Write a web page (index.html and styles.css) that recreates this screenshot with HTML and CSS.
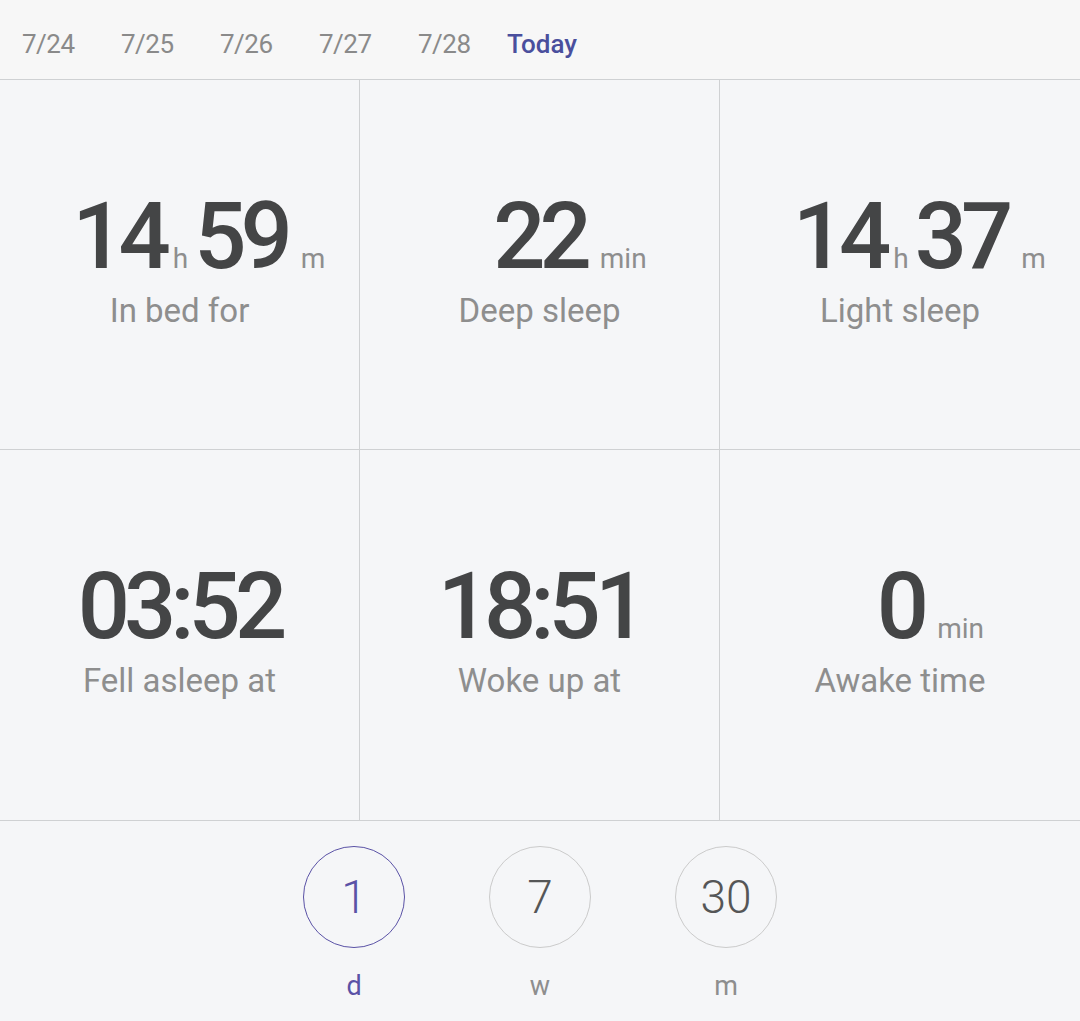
FILE: index.html
```html
<!DOCTYPE html>
<html>
<head>
<meta charset="utf-8">
<link rel="stylesheet" href="styles.css">
</head>
<body>
<div class="app">
  <header class="dates">
    <span class="date">7/24</span>
    <span class="date">7/25</span>
    <span class="date">7/26</span>
    <span class="date">7/27</span>
    <span class="date">7/28</span>
    <span class="date active">Today</span>
  </header>
  <section class="grid">
    <div class="cell">
      <div class="value">
        <span class="spacer"></span>
        <span class="num">14<span class="unit mid">h</span>59</span>
        <span class="unit tail">m</span>
      </div>
      <div class="label">In bed for</div>
    </div>
    <div class="cell">
      <div class="value">
        <span class="spacer"></span>
        <span class="num">22</span>
        <span class="unit tail">min</span>
      </div>
      <div class="label">Deep sleep</div>
    </div>
    <div class="cell last">
      <div class="value">
        <span class="spacer"></span>
        <span class="num">14<span class="unit mid">h</span>37</span>
        <span class="unit tail">m</span>
      </div>
      <div class="label">Light sleep</div>
    </div>
    <div class="cell row2">
      <div class="value">
        <span class="spacer"></span>
        <span class="num">03:52</span>
        <span class="spacer"></span>
      </div>
      <div class="label">Fell asleep at</div>
    </div>
    <div class="cell row2">
      <div class="value">
        <span class="spacer"></span>
        <span class="num">18:51</span>
        <span class="spacer"></span>
      </div>
      <div class="label">Woke up at</div>
    </div>
    <div class="cell row2 last">
      <div class="value">
        <span class="spacer"></span>
        <span class="num">0</span>
        <span class="unit tail">min</span>
      </div>
      <div class="label">Awake time</div>
    </div>
  </section>
  <footer class="range">
    <div class="opt selected">
      <div class="circle">1</div>
      <div class="opt-label">d</div>
    </div>
    <div class="opt">
      <div class="circle">7</div>
      <div class="opt-label">w</div>
    </div>
    <div class="opt">
      <div class="circle">30</div>
      <div class="opt-label">m</div>
    </div>
  </footer>
</div>
</body>
</html>
```

FILE: styles.css
```css
* { box-sizing: border-box; }
html, body {
  margin: 0;
  padding: 0;
  background: #f5f6f8;
}
body {
  font-family: Roboto, "Noto Sans", sans-serif;
  width: 1080px;
  height: 1021px;
  overflow: hidden;
}
.app {
  width: 1080px;
}
.dates {
  height: 80px;
  background: #f7f7f7;
  border-bottom: 1px solid #cfd1d3;
  display: flex;
  align-items: center;
  padding-left: 22px;
  padding-top: 8px;
  gap: 46px;
}
.date {
  font-size: 26px;
  color: #8a8a8a;
  letter-spacing: -0.5px;
  width: 53px;
}
.date.active {
  color: #4a4f9d;
  font-weight: 500;
  width: auto;
  letter-spacing: 0;
  margin-left: -10px;
}
.grid {
  display: grid;
  grid-template-columns: repeat(3, 360px);
  grid-template-rows: 370px 371px;
}
.cell {
  border-right: 1px solid #cfd1d3;
  border-bottom: 1px solid #cfd1d3;
  display: flex;
  flex-direction: column;
  justify-content: center;
  align-items: stretch;
  padding-bottom: 8px;
}
.cell.last { border-right: none; }
.cell.row2 { padding-bottom: 10px; }
.value {
  display: grid;
  grid-template-columns: 1fr auto 1fr;
  align-items: baseline;
  line-height: 1;
}
.num {
  font-size: 92px;
  font-weight: 500;
  color: #444546;
  letter-spacing: -6px;
  white-space: nowrap;
}
.unit {
  font-size: 28px;
  color: #8e8e8e;
  font-weight: 400;
  letter-spacing: 0;
}
.unit.mid {
  margin: 0 6px 0 8px;
}
.unit.tail {
  justify-self: start;
  margin-left: 14px;
}
.label {
  text-align: center;
  font-size: 33px;
  color: #8e8e8e;
  margin-top: 8px;
}
.range {
  height: 200px;
  display: flex;
  justify-content: center;
  gap: 84px;
  padding-top: 25px;
}
.opt {
  display: flex;
  flex-direction: column;
  align-items: center;
  width: 102px;
}
.circle {
  width: 102px;
  height: 102px;
  border-radius: 50%;
  border: 1.5px solid #cbcbcb;
  display: flex;
  align-items: center;
  justify-content: center;
  font-size: 46px;
  font-weight: 300;
  color: #555657;
}
.opt.selected .circle {
  border-color: #5a52a6;
  color: #5a52a6;
}
.opt-label {
  margin-top: 22px;
  font-size: 27px;
  color: #8e8e8e;
}
.opt.selected .opt-label {
  color: #5a52a6;
}
```
